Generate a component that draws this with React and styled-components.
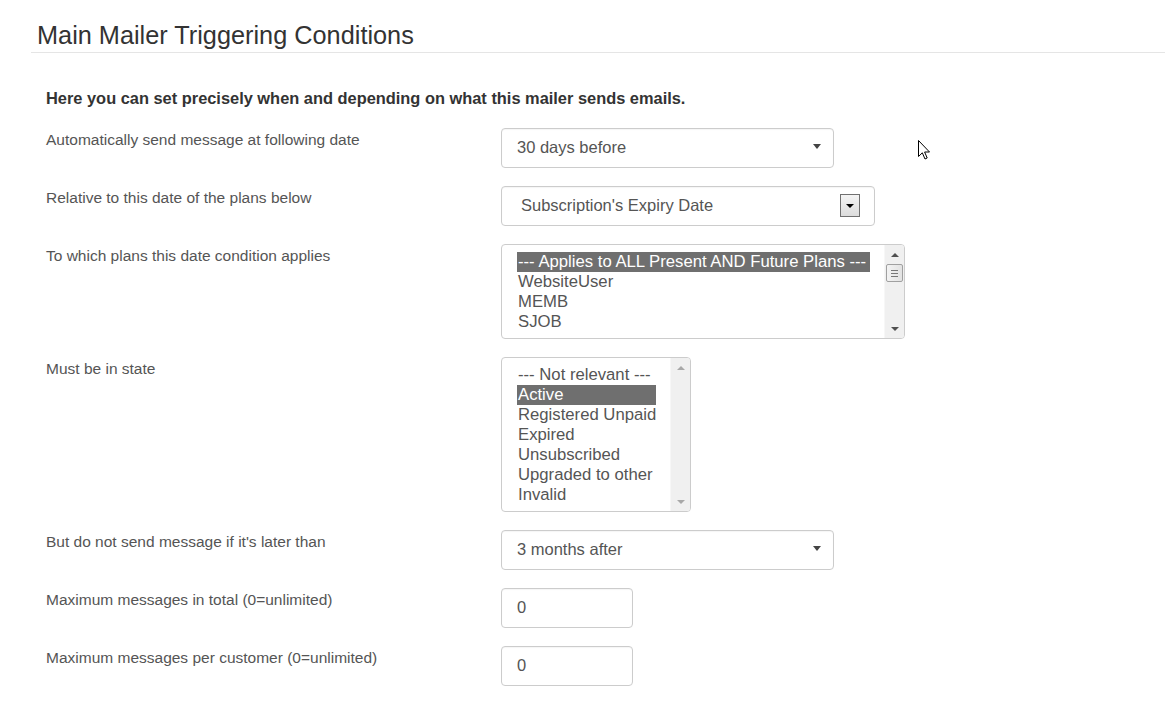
import React from "react";
import styled, { createGlobalStyle } from "styled-components";

const Global = createGlobalStyle`
  html, body {
    margin: 0;
    padding: 0;
    background: #fff;
  }
  body {
    font-family: "Liberation Sans", Arial, sans-serif;
    color: #333;
  }
`;

const Page = styled.div`
  position: relative;
  width: 1165px;
  height: 720px;
  padding-top: 22px;
  box-sizing: border-box;
  overflow: hidden;
`;

const Header = styled.div`
  margin-left: 31px;
  padding: 0 0 4px 6px;
  border-bottom: 1px solid #e5e5e5;
`;

const Title = styled.h1`
  margin: 0;
  font-size: 25.3px;
  line-height: 26px;
  font-weight: 400;
  color: #333;
`;

const Form = styled.div`
  padding: 35px 0 0 46px;
`;

const Intro = styled.p`
  margin: 0 0 20px;
  font-size: 16.4px;
  line-height: 20px;
  font-weight: 700;
  color: #333;
`;

const Row = styled.div`
  display: grid;
  grid-template-columns: 455px auto;
  justify-content: start;
  margin-bottom: 18px;
`;

const Label = styled.label`
  padding-top: 2px;
  font-size: 15.5px;
  line-height: 20px;
  color: #555;
`;

const Field = styled.div`
  display: flex;
  align-items: center;
  box-sizing: border-box;
  width: ${(p) => p.$width}px;
  height: 40px;
  padding: 0 ${(p) => (p.$padRight ? p.$padRight : 12)}px 1px ${(p) => p.$padLeft || 15}px;
  border: 1px solid #ccc;
  border-radius: 4px;
  box-shadow: inset 0 1px 1px rgba(0, 0, 0, 0.04);
  font-size: 16.5px;
  color: #555;
  background: #fff;
`;

const FieldText = styled.span`
  flex: 1;
`;

const Caret = styled.span`
  width: 0;
  height: 0;
  margin-top: -2px;
  border-left: 4px solid transparent;
  border-right: 4px solid transparent;
  border-top: 5px solid #444;
`;

const ClassicButton = styled.span`
  display: flex;
  align-items: center;
  justify-content: center;
  box-sizing: border-box;
  width: 20px;
  height: 23px;
  border: 1px solid #707070;
  background: linear-gradient(#f4f4f4, #dcdcdc);
`;

const ClassicArrow = styled.span`
  width: 0;
  height: 0;
  border-left: 4px solid transparent;
  border-right: 4px solid transparent;
  border-top: 4px solid #000;
`;

const ListBox = styled.div`
  display: flex;
  box-sizing: border-box;
  width: ${(p) => p.$width}px;
  height: ${(p) => p.$height}px;
  border: 1px solid #ccc;
  border-radius: 4px;
  background: #fff;
  overflow: hidden;
`;

const Options = styled.div`
  flex: 1;
  padding: 7px 14px 0 15px;
  font-size: 16.7px;
  line-height: 20px;
  color: #555;
`;

const Option = styled.div`
  height: 20px;
  padding-left: 1px;
  white-space: nowrap;
  overflow: hidden;
  background: ${(p) => (p.$selected ? "#6f6f6f" : "transparent")};
  color: ${(p) => (p.$selected ? "#fff" : "#555")};
`;

const Scrollbar = styled.div`
  display: flex;
  flex-direction: column;
  align-items: center;
  justify-content: space-between;
  width: 20px;
  padding: 8px 0 7px;
  box-sizing: border-box;
  background: #f0f0f0;
  border-left: 1px solid #f7f7f7;
`;

const Arrow = styled.span`
  width: 0;
  height: 0;
  border-left: 4px solid transparent;
  border-right: 4px solid transparent;
  ${(p) => (p.$up ? "border-bottom" : "border-top")}: 4px solid ${(p) =>
    p.$disabled ? "#a8a8a8" : "#505050"};
`;

const Track = styled.div`
  flex: 1;
  width: 100%;
  display: flex;
  justify-content: center;
  padding-top: 7px;
`;

const Thumb = styled.div`
  display: flex;
  flex-direction: column;
  align-items: center;
  justify-content: center;
  gap: 2px;
  box-sizing: border-box;
  width: 17px;
  height: 18px;
  border: 1px solid #a0a0a0;
  border-radius: 2px;
  background: linear-gradient(90deg, #f3f3f3, #e2e2e2);
`;

const Grip = styled.span`
  width: 7px;
  height: 1px;
  background: #777;
`;

const Cursor = styled.svg`
  position: absolute;
  left: 918px;
  top: 140px;
`;

const planOptions = [
  "--- Applies to ALL Present AND Future Plans ---",
  "WebsiteUser",
  "MEMB",
  "SJOB",
];

const stateOptions = [
  "--- Not relevant ---",
  "Active",
  "Registered Unpaid",
  "Expired",
  "Unsubscribed",
  "Upgraded to other",
  "Invalid",
];

function Select({ width, value }) {
  return (
    <Field $width={width}>
      <FieldText>{value}</FieldText>
      <Caret />
    </Field>
  );
}

function List({ width, height, items, selected, thumb }) {
  return (
    <ListBox $width={width} $height={height}>
      <Options>
        {items.map((it) => (
          <Option key={it} $selected={it === selected}>
            {it}
          </Option>
        ))}
      </Options>
      <Scrollbar>
        <Arrow $up $disabled={!thumb} />
        <Track>
          {thumb && (
            <Thumb>
              <Grip />
              <Grip />
              <Grip />
            </Thumb>
          )}
        </Track>
        <Arrow $disabled={!thumb} />
      </Scrollbar>
    </ListBox>
  );
}

export default function App() {
  return (
    <Page>
      <Global />
      <Header>
        <Title>Main Mailer Triggering Conditions</Title>
      </Header>
      <Form>
        <Intro>Here you can set precisely when and depending on what this mailer sends emails.</Intro>

        <Row>
          <Label>Automatically send message at following date</Label>
          <Select width={333} value="30 days before" />
        </Row>

        <Row>
          <Label>Relative to this date of the plans below</Label>
          <Field $width={374} $padLeft={19} $padRight={14}>
            <FieldText>Subscription's Expiry Date</FieldText>
            <ClassicButton>
              <ClassicArrow />
            </ClassicButton>
          </Field>
        </Row>

        <Row>
          <Label>To which plans this date condition applies</Label>
          <List width={404} height={95} items={planOptions} selected={planOptions[0]} thumb />
        </Row>

        <Row>
          <Label>Must be in state</Label>
          <List width={190} height={155} items={stateOptions} selected="Active" />
        </Row>

        <Row>
          <Label>But do not send message if it's later than</Label>
          <Select width={333} value="3 months after" />
        </Row>

        <Row>
          <Label>Maximum messages in total (0=unlimited)</Label>
          <Field $width={132}>0</Field>
        </Row>

        <Row>
          <Label>Maximum messages per customer (0=unlimited)</Label>
          <Field $width={132}>0</Field>
        </Row>
      </Form>

      <Cursor width="13" height="21" viewBox="0 0 13 21">
        <path
          d="M0.5 0.5 L0.5 16.5 L4.3 12.8 L7 19 L9.2 18 L6.6 12 L11.5 12 Z"
          fill="#fff"
          stroke="#000"
          strokeWidth="1"
          strokeLinejoin="miter"
        />
      </Cursor>
    </Page>
  );
}
